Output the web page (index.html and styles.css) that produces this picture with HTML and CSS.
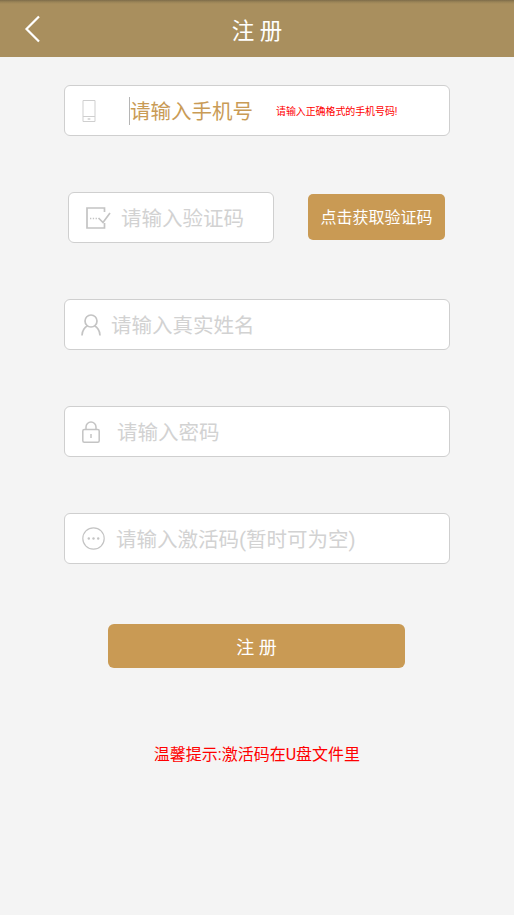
FILE: index.html
```html
<!DOCTYPE html>
<html lang="zh-CN">
<head>
<meta charset="utf-8">
<title>注册</title>
<link rel="stylesheet" href="styles.css">
</head>
<body>
<header class="topbar">
  <svg class="back" viewBox="0 0 16 28" width="16" height="28"><path d="M15 1.500 2.500 14 15 26.500" fill="none" stroke="#fff" stroke-width="2.200"/></svg>
  <h1 class="title">注 册</h1>
</header>
<main class="form">
  <div class="field field-phone">
    <svg class="icon" width="14" height="22" viewBox="0 0 14 22"><path d="M1 .5h12v21H1zM1 16.500h12M5.500 19h3M7 18v2" fill="none" stroke="#cfcfcf"/></svg>
    <span class="caret"></span>
    <span class="value">请输入手机号</span>
    <span class="error">请输入正确格式的手机号码!</span>
  </div>
  <div class="row-code">
    <div class="field field-code">
      <svg class="icon" width="25" height="22" viewBox="0 0 25 22"><path d="M18.500 5V1H1v20h17.500v-5" fill="none" stroke="#c4c4c4" stroke-width="1.700"/><path d="M4 11.500h1.300M6.800 11.500h1.300M9.600 11.500h1.300" stroke="#c4c4c4" stroke-width="1.300"/><path d="M12.500 11l4.500 4.500L24 6" fill="none" stroke="#c4c4c4" stroke-width="1.700"/></svg>
      <span class="hint">请输入验证码</span>
    </div>
    <button class="send" type="button">点击获取验证码</button>
  </div>
  <div class="field field-name">
    <svg class="icon" width="20" height="22" viewBox="0 0 20 22"><circle cx="10" cy="7" r="6" fill="none" stroke="#c4c4c4" stroke-width="1.700"/><path d="M1 21.500c0-5 3-8.500 5.500-9.500M19 21.500c0-5-3-8.500-5.500-9.500" fill="none" stroke="#c4c4c4" stroke-width="1.700"/></svg>
    <span class="hint">请输入真实姓名</span>
  </div>
  <div class="field field-pass">
    <svg class="icon" width="18" height="22" viewBox="0 0 18 22"><rect x=".8" y="8.500" width="16.400" height="12.700" rx="1.500" fill="none" stroke="#c4c4c4" stroke-width="1.500"/><path d="M4 8.500V6a5 5 0 0 1 10 0v2.500" fill="none" stroke="#c4c4c4" stroke-width="1.500"/><path d="M9 13v4" stroke="#c4c4c4" stroke-width="1.500"/></svg>
    <span class="hint">请输入密码</span>
  </div>
  <div class="field field-active">
    <svg class="icon" width="23" height="23" viewBox="0 0 23 23"><circle cx="11.500" cy="11.500" r="10.700" fill="none" stroke="#c4c4c4" stroke-width="1.200"/><circle cx="6.800" cy="11.500" r="1.200" fill="#c4c4c4"/><circle cx="11.500" cy="11.500" r="1.200" fill="#c4c4c4"/><circle cx="16.200" cy="11.500" r="1.200" fill="#c4c4c4"/></svg>
    <span class="hint">请输入激活码(暂时可为空)</span>
  </div>
  <button class="submit" type="button">注 册</button>
  <p class="tip">温馨提示:激活码在U盘文件里</p>
</main>
</body>
</html>
```

FILE: styles.css
```css
* { box-sizing: border-box; }
html, body { margin: 0; height: 100%; }
body {
  background: #f4f4f4;
  font-family: Roboto, "Noto Sans CJK SC", sans-serif;
  overflow: hidden;
}
.topbar {
  height: 57px;
  background: linear-gradient(#7d6b49 0, #9a8457 2px, #a98f5e 4px);
  display: flex;
  align-items: center;
  justify-content: center;
  position: relative;
}
.back { position: absolute; left: 24px; top: 15px; }
.title { margin: 0; font-size: 22.5px; font-weight: 400; color: #fff; }
.form {
  padding: 28px 64px 0;
  display: flex;
  flex-direction: column;
  gap: 56px;
}
.field {
  height: 51px;
  background: #fff;
  border: 1px solid #cfcfcf;
  border-radius: 6px;
  display: flex;
  align-items: center;
  font-size: 20.5px;
  flex: none;
}
.icon { flex: none; }
.hint { color: #d2d2d2; white-space: nowrap; margin-bottom: 2px; }
.field-phone { padding-left: 17px; position: relative; }
.caret { width: 1px; height: 28px; background: #b5b5b5; margin-left: 33px; flex: none; }
.value { color: #c99b56; white-space: nowrap; margin-bottom: 2px; }
.error { color: #f00; font-size: 10px; letter-spacing: -.1px; margin-left: 23px; white-space: nowrap; }
.row-code { display: flex; align-items: flex-start; padding-left: 4px; }
.field-code { width: 206px; padding-left: 17px; gap: 10px; }
.send {
  width: 137px;
  height: 46px;
  margin: 2px 0 0 34px;
  background: #c99a54;
  border: 0;
  border-radius: 5px;
  color: #fff;
  font: 16px Roboto, "Noto Sans CJK SC", sans-serif;
  padding: 0 0 2px;
}
.field-name { padding-left: 16px; gap: 10px; }
.field-pass { padding-left: 17px; gap: 17px; }
.field-active { padding-left: 17px; gap: 11px; }
.submit {
  width: 297px;
  height: 44px;
  margin: 4px 0 0 44px;
  background: #c99a54;
  border: 0;
  border-radius: 6px;
  color: #fff;
  font: 18px Roboto, "Noto Sans CJK SC", sans-serif;
  padding: 0;
}
.tip {
  margin: 20px 0 0 0;
  text-align: center;
  color: #f00;
  font-size: 16px;
  line-height: 22px;
}
```
